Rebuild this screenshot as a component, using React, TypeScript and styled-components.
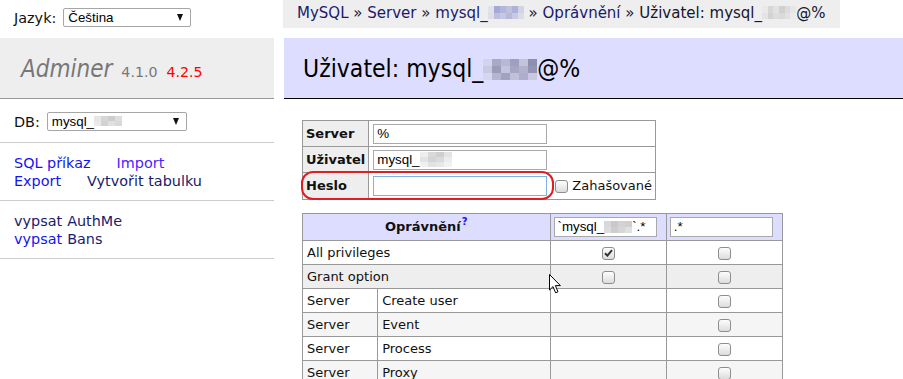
import React from 'react';
import styled, { createGlobalStyle } from 'styled-components';

const Global = createGlobalStyle`
  html, body { margin: 0; padding: 0; background: #fff; }
  body { font: 14.4px/1.25 "DejaVu Sans", Verdana, sans-serif; color: #000; }
`;

const Page = styled.div`
  position: relative;
  display: flex;
  align-items: flex-start;
  width: 903px;
  height: 379px;
  overflow: hidden;
`;

/* ---------- mosaic (pixelated / censored text) ---------- */
const MosaicWrap = styled.span<{ $va: number }>`
  display: inline-block;
  overflow: hidden;
  vertical-align: ${p => p.$va}px;
  line-height: 0;
`;
const MosaicGrid = styled.span<{ $cols: number; $cw: number; $ch: number }>`
  display: grid;
  grid-template-columns: repeat(${p => p.$cols}, ${p => p.$cw}px);
  grid-auto-rows: ${p => p.$ch}px;
`;
const MosaicCell = styled.span<{ $c: string }>`
  background: ${p => p.$c};
`;
function Mosaic({ colors, cols, cw, ch, va = 0 }: { colors: string[]; cols: number; cw: number; ch: number; va?: number }) {
  return (
    <MosaicWrap $va={va}>
      <MosaicGrid $cols={cols} $cw={cw} $ch={ch}>
        {colors.map((c, i) => (
          <MosaicCell key={i} $c={c} />
        ))}
      </MosaicGrid>
    </MosaicWrap>
  );
}

/* ---------- sidebar ---------- */
const Sidebar = styled.aside`
  width: 274px;
  flex: none;
`;

const LangRow = styled.div`
  height: 38px;
  box-sizing: border-box;
  display: flex;
  align-items: center;
  gap: 7px;
  padding: 0 0 3px 14px;
  color: #111;
`;

const SelectBox = styled.div<{ $w: number }>`
  box-sizing: border-box;
  width: ${p => p.$w}px;
  height: 19px;
  display: flex;
  align-items: center;
  justify-content: space-between;
  padding: 0 7px 0 4px;
  border: 1px solid #a6a6a6;
  border-radius: 2px;
  background: #fff;
  font: 13.33px/1 "Liberation Sans", Arial, sans-serif;
  color: #000;
`;

const SelectValue = styled.span`
  display: flex;
  align-items: center;
  white-space: nowrap;
`;

const SelectArrow = styled.span`
  width: 0;
  height: 0;
  border-left: 3.5px solid transparent;
  border-right: 3.5px solid transparent;
  border-top: 7px solid #111;
`;

const Brand = styled.div`
  height: 44px;
  padding: 16px 0 0 21px;
  background: #eee;
  border-bottom: 1px solid #999;
  display: flex;
  align-items: baseline;
  line-height: 30px;
`;

const BrandName = styled.span`
  font: italic 24px/30px "DejaVu Sans Condensed", "DejaVu Sans", sans-serif;
  color: #777;
`;

const Version = styled.span<{ $update?: boolean }>`
  font-size: 14.2px;
  color: ${p => (p.$update ? '#f00' : '#777')};
  margin-left: ${p => (p.$update ? 9 : 9)}px;
`;

const MenuBlock = styled.div<{ $pt: number; $pb: number }>`
  padding: ${p => p.$pt}px 14px ${p => p.$pb}px;
  border-bottom: 1px solid #ccc;
`;

const DbRow = styled.div`
  display: flex;
  align-items: center;
  gap: 7px;
  color: #111;
`;

const LinkLine = styled.div<{ $gap: number }>`
  display: flex;
  gap: ${p => p.$gap}px;
  line-height: 18px;
  white-space: nowrap;
`;

const Link = styled.a<{ $tone?: 'visited' | 'fresh' | 'violet' }>`
  color: ${p => (p.$tone === 'visited' ? '#1a1a6e' : p.$tone === 'violet' ? '#4a22ff' : '#1414f0')};
  text-decoration: none;
`;

/* ---------- main ---------- */
const Main = styled.main`
  flex: 1;
  min-width: 0;
  margin-left: 10px;
  display: flex;
  flex-direction: column;
  align-items: flex-start;
`;

const Breadcrumb = styled.div`
  margin-left: -1px;
  height: 28px;
  line-height: 26px;
  padding: 0 15px 0 14px;
  background: #eee;
  font-size: 15px;
  white-space: nowrap;
  color: #151530;
`;

const Sep = styled.span`
  margin: 0 0.32em;
`;

const Heading = styled.h2`
  align-self: stretch;
  margin: 10px 0 0;
  height: 44px;
  padding: 16px 0 0 19px;
  background: #ddf;
  border-bottom: 1px solid #000;
  font: 24.5px/30px "DejaVu Sans Condensed", "DejaVu Sans", sans-serif;
  font-weight: normal;
  color: #000;
  white-space: nowrap;
`;

const Table = styled.table<{ $mt: number; $fixed?: boolean; $w?: number }>`
  margin: ${p => p.$mt}px 0 0 18px;
  border-spacing: 0;
  border-top: 1px solid #999;
  border-left: 1px solid #999;
  font-size: 13px;
  line-height: 16px;
  color: #111;
  ${p => (p.$fixed ? `table-layout: fixed; width: ${p.$w}px;` : '')}
`;

const Col = styled.col<{ $w: number }>`
  width: ${p => p.$w}px;
`;

const Th = styled.th<{ $h: number; $head?: boolean }>`
  height: ${p => p.$h}px;
  padding: 0 3px;
  border-right: 1px solid #999;
  border-bottom: 1px solid #999;
  background: ${p => (p.$head ? '#ddf' : '#eee')};
  text-align: ${p => (p.$head ? 'center' : 'left')};
  font-weight: bold;
  vertical-align: middle;
  white-space: nowrap;
`;

const Td = styled.td<{ $h: number; $bg?: string; $center?: boolean }>`
  height: ${p => p.$h}px;
  padding: 0 3px 0 4px;
  border-right: 1px solid #999;
  border-bottom: 1px solid #999;
  background: ${p => p.$bg ?? '#fff'};
  text-align: ${p => (p.$center ? 'center' : 'left')};
  vertical-align: middle;
  white-space: nowrap;
`;

const FieldRow = styled.div`
  display: flex;
  align-items: center;
`;

const FieldBox = styled.div<{ $w: number }>`
  box-sizing: border-box;
  width: ${p => p.$w}px;
  height: 20px;
  display: flex;
  align-items: center;
  padding: 0 3px;
  border: 1px solid #a9a9a9;
  background: #fff;
  font: 13.33px/1 "Liberation Sans", Arial, sans-serif;
  color: #000;
  white-space: nowrap;
  overflow: hidden;
`;

const PasswordInput = styled.input`
  box-sizing: border-box;
  width: 174px;
  height: 20px;
  margin: 0;
  padding: 0 3px;
  border: 1px solid #7fb0e6;
  outline: none;
  background: #fff;
  font: 13.33px "Liberation Sans", Arial, sans-serif;
`;

const CheckBox = styled.span`
  box-sizing: border-box;
  display: inline-flex;
  align-items: center;
  justify-content: center;
  width: 13px;
  height: 13px;
  border: 1px solid #8e8e8e;
  border-radius: 3px;
  background: linear-gradient(#fdfdfd, #dcdcdc);
  vertical-align: middle;
`;

const CheckLabel = styled.label`
  display: flex;
  align-items: center;
  gap: 4px;
  margin-left: 8px;
  color: #111;
`;

const HelpSup = styled.sup`
  font-size: 10px;
  line-height: 0;
  vertical-align: 6px;
  margin-left: 1px;
  a {
    color: #1414f0;
    text-decoration: none;
  }
`;

/* ---------- overlays ---------- */
const Highlight = styled.div`
  position: absolute;
  left: 301px;
  top: 171px;
  width: 253px;
  height: 29px;
  box-sizing: border-box;
  border: 2px solid #e31b23;
  border-radius: 12px;
  pointer-events: none;
`;

const Cursor = styled.svg`
  position: absolute;
  left: 548px;
  top: 273px;
`;

function Check({ checked }: { checked?: boolean }) {
  return (
    <CheckBox>
      {checked && (
        <svg width="9" height="8" viewBox="0 0 9 8">
          <path d="M1 4.2 L3.4 6.6 L8 1.2" fill="none" stroke="#333" strokeWidth="2" />
        </svg>
      )}
    </CheckBox>
  );
}

const crumbBlur1 = ['#e2e2ea', '#a4a9d6', '#b3b6dc', '#bfc1df', '#aeb1d8', '#d2d3e6', '#dedee8', '#bcbfdf', '#c6c8e2', '#b6b9dc', '#c8cae3', '#dcdce9'];
const crumbBlur2 = ['#e9e9e9', '#d7d7d7', '#e2e2e2', '#d0d0d0', '#dcdcdc', '#e6e6e6', '#e4e4e4', '#d3d3d3', '#dddddd', '#d9d9d9', '#e1e1e1', '#ebebeb'];
const headBlur = [
  '#d3d3ec', '#a9a9c6', '#b8b8d2', '#9f9fbf', '#c3c3dc', '#8e8eae',
  '#c9c9e2', '#9b9bba', '#c4c4dc', '#a6a6c4', '#b2b2cf', '#9494b4',
  '#d6d6ee', '#b5b5d1', '#a1a1c0', '#c0c0da', '#aeaecb', '#c8c8e2',
];
const greyBlur = ['#e6e6e6', '#d6d6d6', '#cdcdcd', '#dedede', '#eaeaea', '#d2d2d2', '#e0e0e0', '#d9d9d9'];
const fieldBlur = ['#eeeeee', '#d9d9d9', '#cfcfcf', '#e4e4e4', '#e3e3e3', '#d4d4d4', '#dbdbdb', '#ececec', '#f0f0f0', '#e2e2e2', '#e7e7e7', '#f2f2f2'];
const privBlur = ['#d8d8d8', '#c9c9c9', '#d3d3d3', '#cfcfcf', '#dcdcdc', '#cdcdcd', '#d6d6d6', '#e0e0e0'];

const privRows: { a: string; b?: string; own: boolean; checked?: boolean; bg: string }[] = [
  { a: 'All privileges', own: true, checked: true, bg: '#fff' },
  { a: 'Grant option', own: true, bg: '#eee' },
  { a: 'Server', b: 'Create user', own: false, bg: '#fff' },
  { a: 'Server', b: 'Event', own: false, bg: '#f5f5f5' },
  { a: 'Server', b: 'Process', own: false, bg: '#fff' },
  { a: 'Server', b: 'Proxy', own: false, bg: '#f5f5f5' },
];

export default function App() {
  return (
    <>
      <Global />
      <Page>
        <Sidebar>
          <LangRow>
            <span>Jazyk:</span>
            <SelectBox $w={128}>
              <SelectValue>Čeština</SelectValue>
              <SelectArrow />
            </SelectBox>
          </LangRow>
          <Brand>
            <BrandName>Adminer</BrandName>
            <Version>4.1.0</Version>
            <Version $update>4.2.5</Version>
          </Brand>
          <MenuBlock $pt={13} $pb={11}>
            <DbRow>
              <span>DB:</span>
              <SelectBox $w={140}>
                <SelectValue>
                  mysql_
                  <Mosaic colors={greyBlur} cols={4} cw={7} ch={5} />
                </SelectValue>
                <SelectArrow />
              </SelectBox>
            </DbRow>
          </MenuBlock>
          <MenuBlock $pt={11} $pb={10}>
            <LinkLine $gap={26}>
              <Link href="#">SQL příkaz</Link>
              <Link href="#" $tone="violet">Import</Link>
            </LinkLine>
            <LinkLine $gap={26}>
              <Link href="#">Export</Link>
              <Link href="#" $tone="visited">Vytvořit tabulku</Link>
            </LinkLine>
          </MenuBlock>
          <MenuBlock $pt={11} $pb={10}>
            <LinkLine $gap={5}>
              <Link href="#" $tone="visited">vypsat</Link>
              <Link href="#" $tone="visited">AuthMe</Link>
            </LinkLine>
            <LinkLine $gap={5}>
              <Link href="#">vypsat</Link>
              <Link href="#" $tone="visited">Bans</Link>
            </LinkLine>
          </MenuBlock>
        </Sidebar>

        <Main>
          <Breadcrumb>
            <Link href="#" $tone="visited">MySQL</Link>
            <Sep>»</Sep>
            <Link href="#" $tone="visited">Server</Link>
            <Sep>»</Sep>
            <Link href="#" $tone="visited">
              mysql_
              <Mosaic colors={crumbBlur1} cols={6} cw={6} ch={6.5} va={-1} />
            </Link>
            <Sep>»</Sep>
            <Link href="#" $tone="visited">Oprávnění</Link>
            <Sep>»</Sep>
            Uživatel: mysql_
            <Mosaic colors={crumbBlur2} cols={6} cw={5.7} ch={6.5} va={-1} />
            @%
          </Breadcrumb>

          <Heading>
            Uživatel: mysql_
            <Mosaic colors={headBlur} cols={6} cw={9} ch={7} va={-3} />
            @%
          </Heading>

          <Table $mt={21}>
            <tbody>
              <tr>
                <Th $h={25}>Server</Th>
                <Td $h={25}>
                  <FieldBox $w={174}>%</FieldBox>
                </Td>
              </tr>
              <tr>
                <Th $h={25}>Uživatel</Th>
                <Td $h={25}>
                  <FieldBox $w={174}>
                    mysql_
                    <Mosaic colors={fieldBlur} cols={4} cw={8} ch={5.3} />
                  </FieldBox>
                </Td>
              </tr>
              <tr>
                <Th $h={26}>Heslo</Th>
                <Td $h={26}>
                  <FieldRow>
                    <PasswordInput type="password" />
                    <CheckLabel>
                      <Check />
                      Zahašované
                    </CheckLabel>
                  </FieldRow>
                </Td>
              </tr>
            </tbody>
          </Table>

          <Table $mt={13} $fixed $w={481}>
            <colgroup>
              <Col $w={75} />
              <Col $w={172} />
              <Col $w={116} />
              <Col $w={116} />
            </colgroup>
            <thead>
              <tr>
                <Th $h={26} $head colSpan={2}>
                  Oprávnění
                  <HelpSup>
                    <a href="#">?</a>
                  </HelpSup>
                </Th>
                <Th $h={26} $head>
                  <FieldBox $w={103}>
                    `mysql_
                    <Mosaic colors={privBlur} cols={4} cw={7} ch={6} />
                    `.*
                  </FieldBox>
                </Th>
                <Th $h={26} $head>
                  <FieldBox $w={103}>.*</FieldBox>
                </Th>
              </tr>
            </thead>
            <tbody>
              {privRows.map((r, i) => (
                <tr key={i}>
                  {r.b ? (
                    <>
                      <Td $h={23} $bg={r.bg}>{r.a}</Td>
                      <Td $h={23} $bg={r.bg}>{r.b}</Td>
                    </>
                  ) : (
                    <Td $h={23} $bg={r.bg} colSpan={2}>{r.a}</Td>
                  )}
                  <Td $h={23} $bg={r.bg} $center>
                    {r.own && <Check checked={r.checked} />}
                  </Td>
                  <Td $h={23} $bg={r.bg} $center>
                    <Check />
                  </Td>
                </tr>
              ))}
            </tbody>
          </Table>
        </Main>

        <Highlight />
        <Cursor width="14" height="22" viewBox="0 0 14 22">
          <path d="M1.5 1.5 V17 L5 13.6 L7.6 19.8 L10 18.8 L7.4 12.6 H12.4 Z" fill="#fff" stroke="#000" strokeWidth="1" strokeLinejoin="miter" />
        </Cursor>
      </Page>
    </>
  );
}
